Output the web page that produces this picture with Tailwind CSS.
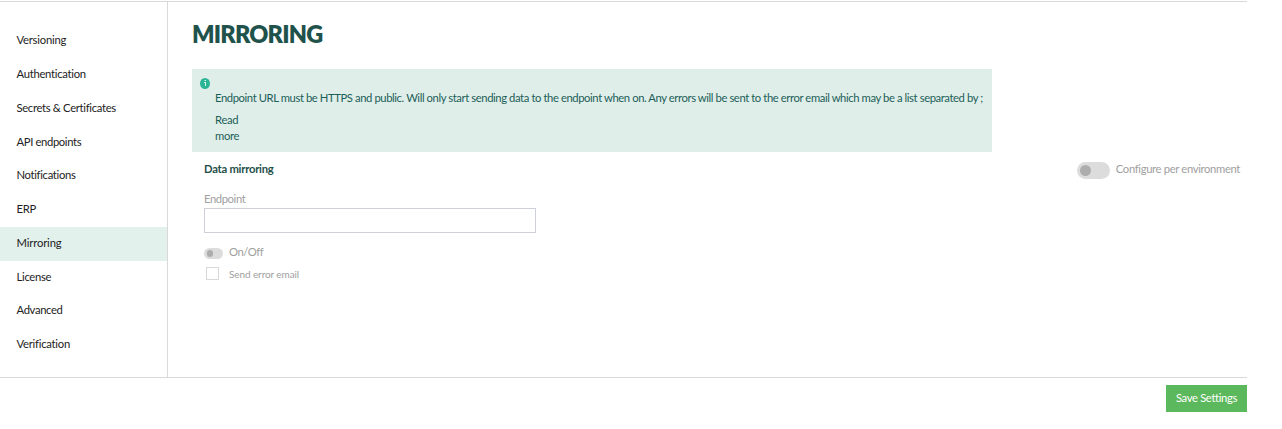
<!DOCTYPE html>
<html lang="en">
<head>
<meta charset="utf-8">
<title>Mirroring</title>
<script src="https://cdn.jsdelivr.net/npm/@tailwindcss/browser@4"></script>
</head>
<body class="h-[429px] overflow-hidden bg-white pt-px font-['Lato',sans-serif] text-[11.25px]">
<div class="flex h-[377px] w-[1247px] border-y border-[#d9d9d9]">
  <nav class="flex w-[168px] shrink-0 flex-col border-r border-[#d9d9d9] pt-[22.5px] text-[#222222] leading-[16px]">
    <a class="flex h-[33.75px] items-center pb-[2px] pl-[16.5px] tracking-[-0.22px]"><span>Versioning</span></a>
    <a class="flex h-[33.75px] items-center pb-[2px] pl-[16.5px] tracking-[-0.28px]"><span>Authentication</span></a>
    <a class="flex h-[33.75px] items-center pb-[2px] pl-[16.5px] tracking-[-0.32px]"><span>Secrets &amp; Certificates</span></a>
    <a class="flex h-[33.75px] items-center pb-[2px] pl-[16.5px] tracking-[-0.36px]"><span>API endpoints</span></a>
    <a class="flex h-[33.75px] items-center pb-[2px] pl-[16.5px] tracking-[-0.33px]"><span>Notifications</span></a>
    <a class="flex h-[33.75px] items-center pb-[2px] pl-[16.5px] tracking-[-0.3px]"><span>ERP</span></a>
    <a class="flex h-[33.75px] items-center bg-[#e2f1ec] pb-[2px] pl-[16.5px] tracking-[-0.15px]"><span>Mirroring</span></a>
    <a class="flex h-[33.75px] items-center pb-[2px] pl-[16.5px] tracking-[-0.3px]"><span>License</span></a>
    <a class="flex h-[33.75px] items-center pb-[2px] pl-[16.5px] tracking-[-0.35px]"><span>Advanced</span></a>
    <a class="flex h-[33.75px] items-center pb-[2px] pl-[16.5px] tracking-[-0.25px]"><span>Verification</span></a>
  </nav>
  <main class="flex-1 pl-6">
    <h1 class="pt-[17px] text-[23.5px] leading-[30px] font-extrabold tracking-[-0.8px] text-[#1f524b]">MIRRORING</h1>
    <section class="mt-5 h-[83px] w-[800px] bg-[#e0eeea] pt-[9px] pl-2 text-[#1b5e57]">
      <svg class="block h-[11px] w-[10px]" viewBox="0 0 10 11"><ellipse cx="5" cy="5.5" rx="5" ry="5.5" fill="#2bb596"/><path d="M4 4h2v4h-1v-3h-1z" fill="#d5f3ea"/><rect x="4.5" y="2" width="1.5" height="1" fill="#d5f3ea"/></svg>
      <div class="pl-[15px] leading-4">
        <p class="mt-px whitespace-nowrap tracking-[-0.41px]">Endpoint URL must be HTTPS and public. Will only start sending data to the endpoint when on. Any errors will be sent to the error email which may be a list separated by ;</p>
        <p class="mt-[6px] tracking-[-0.3px]">Read<br>more</p>
      </div>
    </section>
    <section class="pt-[9px] pl-3 text-[#a0a0a0]">
      <div class="flex h-[18px] items-center justify-between pr-[7px]">
        <h2 class="pb-[2px] font-bold tracking-[-0.25px] text-[#1f4f49]">Data mirroring</h2>
        <label class="flex items-center gap-[6px]"><span class="flex h-[17px] w-[33px] items-center rounded-full bg-[#dcdcdc] pl-[3px]"><span class="size-[11px] rounded-full bg-[#adadad]"></span></span><span class="pb-[2px] tracking-[-0.35px]">Configure per environment</span></label>
      </div>
      <p class="mt-[12px] leading-4 tracking-[-0.4px]">Endpoint</p>
      <div class="mt-px h-[25px] w-[332px] border border-[#cdd0d8]"></div>
      <label class="mt-[11px] flex h-4 items-center gap-[6px]"><span class="mt-[2px] flex h-[11px] w-[19px] items-center rounded-full bg-[#dcdcdc] pl-[3px]"><span class="h-[7px] w-[6px] rounded-full bg-[#adadad]"></span></span><span class="tracking-[-0.45px]">On/Off</span></label>
      <label class="mt-[6px] flex h-4 items-center gap-[10px] pl-[2px] text-[10px]"><span class="-mt-[2px] size-[13px] border border-[#d8d8d8]"></span><span class="tracking-[-0.1px]">Send error email</span></label>
    </section>
  </main>
</div>
<footer class="flex w-[1247px] justify-end pt-[7px]">
  <button class="h-[27px] w-[81px] bg-[#5cb85c] tracking-[-0.35px] text-white">Save Settings</button>
</footer>
</body>
</html>
